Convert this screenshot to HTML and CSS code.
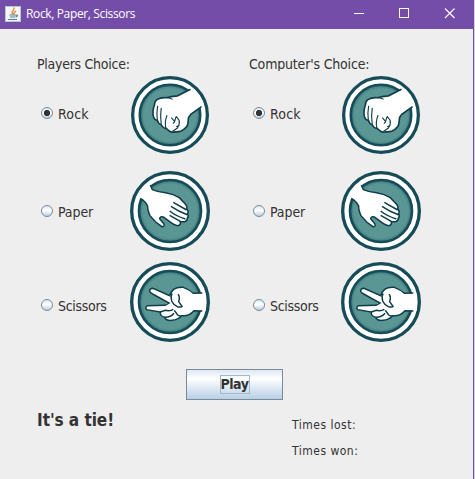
FILE: index.html
```html
<!DOCTYPE html>
<html lang="en">
<head>
<meta charset="utf-8">
<title>Rock, Paper, Scissors</title>
<link rel="stylesheet" href="styles.css">
</head>
<body>
<svg class="defs" width="0" height="0">
  <defs>
    <radialGradient id="teal" cx=".5" cy=".5" r=".5"><stop offset=".87" stop-color="#5a9694"/><stop offset="1" stop-color="#397477"/></radialGradient>
    <symbol id="badge" viewBox="15 15 240 240">
      <circle cx="135" cy="135" r="115" fill="#fff" stroke="#164c58" stroke-width="10"/>
      <circle cx="135" cy="135" r="93" fill="url(#teal)" stroke="#164c58" stroke-width="8"/>
    </symbol>
    <symbol id="rock" viewBox="15 17 240 240">
      <use href="#badge" x="15" y="17" width="240" height="240"/>
      <path d="M196 59L209 58Q230 78 240 107L232 112Z" fill="#fff"/>
      <path d="M196 58L154 79Q137 79 124 84Q108 82 96 89Q87 94 87 106Q80 125 84 142Q87 153 96 153Q98 164 108 167Q113 178 123 178L132 186Q139 192 150 189Q169 190 178 181Q189 174 190 163L192 145L199 135L236 109" fill="#fff"/>
      <path d="M198 58L158 78Q137 79 124 84Q108 82 96 89Q87 94 87 106Q80 125 84 142Q87 153 96 153Q98 164 108 167Q113 178 123 178L132 186Q139 192 150 189Q169 190 178 181Q189 174 190 163L192 145L199 135L232 111" fill="none" stroke="#103d4a" stroke-width="5"/>
      <path d="M97 109Q93 131 96 153M108 115Q104 142 108 165M126 138Q118 157 122 178M139 145L149 157L144 164M154 141L148 160M154 141L163 153Q166 164 158 177L142 188M164 169L154 173M124 84Q134 83 143 89" fill="none" stroke="#103d4a" stroke-width="3.5"/>
    </symbol>
    <symbol id="paper" viewBox="15 17 240 240">
      <use href="#badge" x="15" y="17" width="240" height="240"/>
      <path d="M41 96Q52 71 76 58L83 73Q100 81 122 82Q146 86 163 97L181 116Q188 124 185 130Q193 139 187 145Q193 153 187 158Q188 165 180 169L166 169Q168 179 159 181Q147 180 130 166L115 155Q105 152 104 160L117 176Q119 185 111 184L92 170L75 151Q67 133 68 122Q61 107 41 96Z" fill="#fff"/>
      <path d="M76 59L82 73Q100 81 122 82Q146 86 163 97L181 116Q188 124 185 130Q193 139 187 145Q193 153 187 158Q188 165 180 169L166 169Q168 179 159 181Q147 180 130 166L115 155Q105 152 104 160L117 176Q119 185 111 184L92 170L75 151Q67 133 68 122Q61 107 46 99" fill="none" stroke="#103d4a" stroke-width="4.5"/>
      <path d="M145 111L185 134M138 123Q161 139 187 148M134 137Q151 151 181 161M134 150L167 169" fill="none" stroke="#103d4a" stroke-width="4.5"/>
    </symbol>
    <symbol id="scissors" viewBox="15 15 240 240">
      <use href="#badge" x="15" y="15" width="240" height="240"/>
      <path d="M241 108L205 109Q194 98 175 91Q158 89 146 97Q137 105 134 116L84 94Q73 94 74 103Q76 108 83 111L126 136L120 145L68 146Q59 150 65 158L106 165Q104 176 119 181Q124 192 141 190Q159 188 170 176Q191 179 207 161L242 162Z" fill="#fff"/>
      <path d="M232 108L205 109Q194 98 175 91Q158 89 146 97Q137 105 134 116L84 94Q73 94 74 103Q76 108 83 111L132 138L120 145L68 146Q59 150 65 158L106 165Q104 176 119 181Q124 192 141 190Q159 188 170 176Q191 179 207 161L232 162M106 165L121 160Q136 163 145 157M119 181Q136 182 147 169M159 112Q166 119 161 134L171 148Q166 152 157 149Q144 142 140 132Q136 120 141 109M148 160L158 174Q163 178 170 176" fill="none" stroke="#103d4a" stroke-width="4.5"/>
    </symbol>
  </defs>
</svg>
<div class="window">
  <header class="titlebar">
    <svg class="java" viewBox="0 0 16 16"><rect x=".5" y=".5" width="15" height="15" fill="#f3f5f6" stroke="#bac6ce"/><path d="M8 8C5 6 10 4 9 1.5M9 8.5C8 7 10 6 11 5" fill="none" stroke="#e58b3c" stroke-width="1.4"/><path d="M4.500 9H11M5 11H10.500M3 13.500H12M11 9Q14 9 11 11" fill="none" stroke="#567b91" stroke-width="1.2"/></svg>
    <h1>Rock, Paper, Scissors</h1>
    <svg class="controls" viewBox="0 0 110 12" fill="none" stroke="#fff"><path d="M0 5.500H10M45.500 .5H54.500V9.500H45.500Z" shape-rendering="crispEdges"/><path d="M91 .5L100.500 10M100.500 .5L91 10" stroke-width="1.1"/></svg>
  </header>
  <main>
    <div class="choices">
      <section class="player">
        <h2>Players Choice:</h2>
        <div class="row rock"><label><input type="radio" name="p" checked><span>Rock</span></label><svg><use href="#rock"/></svg></div>
        <div class="row paper"><label><input type="radio" name="p"><span>Paper</span></label><svg><use href="#paper"/></svg></div>
        <div class="row scissors"><label><input type="radio" name="p"><span>Scissors</span></label><svg><use href="#scissors"/></svg></div>
      </section>
      <section class="computer">
        <h2>Computer's Choice:</h2>
        <div class="row rock"><label><input type="radio" name="c" checked><span>Rock</span></label><svg><use href="#rock"/></svg></div>
        <div class="row paper"><label><input type="radio" name="c"><span>Paper</span></label><svg><use href="#paper"/></svg></div>
        <div class="row scissors"><label><input type="radio" name="c"><span>Scissors</span></label><svg><use href="#scissors"/></svg></div>
      </section>
    </div>
    <button><span>Play</span></button>
    <footer>
      <strong>It's a tie!</strong>
      <div class="scores"><p class="lost">Times lost:</p><p class="won">Times won:</p></div>
    </footer>
  </main>
</div>
</body>
</html>
```

FILE: styles.css
```css
* { box-sizing: border-box; }
body { margin: 0; overflow: hidden; background: #d5d2d8; }
.defs { position: absolute; }
.window { width: 474px; height: 479px; background: #eee; border-right: 1px solid #744da9; color: #333; font-family: "DejaVu Sans Condensed", "DejaVu Sans", sans-serif; font-stretch: condensed; }
.titlebar { height: 29px; width: 474px; background: #744da9; display: flex; align-items: center; padding: 0 10px 2px 5px; color: #fff; }
.java { width: 16px; height: 16px; margin-right: 5px; }
h1 { margin: 1px auto 0 0; font: 12px/18px "Open Sans", sans-serif; letter-spacing: -.36px; white-space: nowrap; }
.controls { width: 110px; height: 12px; }
.choices { display: grid; grid-template-columns: 212px 212px; padding-left: 37px; }
h2 { margin: 27px 0 4px; height: 15px; font-size: 14px; line-height: 17px; font-weight: normal; white-space: nowrap; letter-spacing: -.27px; }
.computer h2 { overflow: hidden; letter-spacing: -.18px; }
.row { display: flex; height: 80px; }
.row svg { display: block; width: 80px; height: 80px; flex: none; }
.row.rock svg { height: 78px; margin-top: 1px; }
.row.rock svg use { height: 80px; }
.row.paper { margin-top: 15px; }
.row.paper svg { margin-top: 1px; }
.row.scissors { margin-top: 12px; }
label { width: 93px; padding: 30px 0 0 4px; display: flex; align-items: flex-start; font-size: 14px; line-height: 19px; letter-spacing: -.3px; }
.rock label { letter-spacing: .2px; }
.paper label { padding-top: 33px; letter-spacing: -.1px; }
.scissors label { padding-top: 35px; }
.computer label { width: 92px; }
input { appearance: none; width: 12px; height: 12px; margin: 2px 5px 0 0; flex: none; border: 1px solid #7a8a99; border-radius: 50%; background: linear-gradient(#dce7f1, #fff 45%, #b8cfe5); }
input:checked { background: radial-gradient(circle, #333 0 2.8px, transparent 3.4px), linear-gradient(#dce7f1, #fff 45%, #b8cfe5); }
button { display: flex; align-items: center; justify-content: center; width: 97px; height: 31px; margin: 27px 0 0 186px; padding: 0 0 1px; border: 1px solid #7a8a99; background: linear-gradient(#dde8f3, #fff 30%, #b8cfe5); color: #333; font: bold 14px/19px "DejaVu Sans Condensed", "DejaVu Sans", sans-serif; letter-spacing: -.5px; }
button span { height: 19px; width: 30px; border: 1px solid #a3b8cc; display: flex; align-items: center; justify-content: center; }
footer { display: flex; padding-left: 37px; }
strong { width: 255px; padding-top: 10px; font-size: 17px; line-height: 20px; letter-spacing: -.05px; }
.scores { padding-top: 17px; font-size: 12px; line-height: 16px; }
p { margin: 0 0 10px; letter-spacing: .5px; white-space: nowrap; }
```
